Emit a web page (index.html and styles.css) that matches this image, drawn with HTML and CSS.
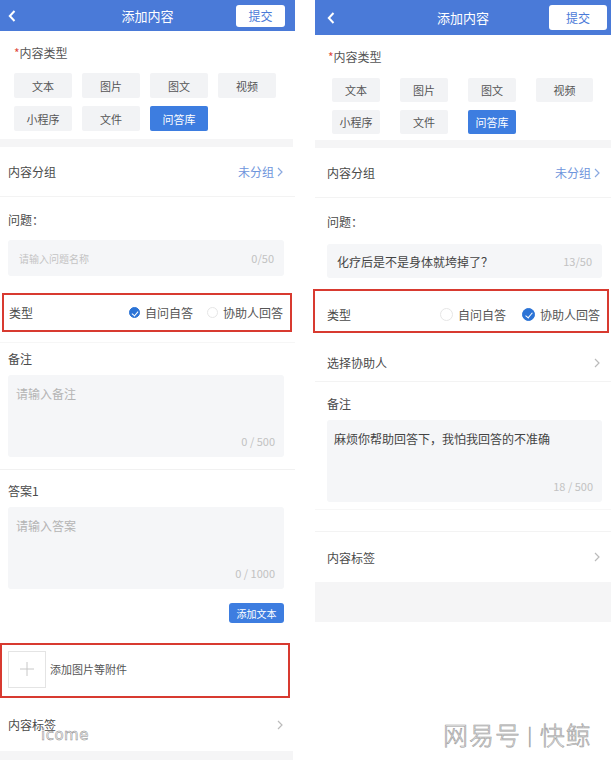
FILE: index.html
```html
<!DOCTYPE html>
<html lang="zh-CN">
<head>
    <meta charset="UTF-8">
    <meta name="viewport" content="width=device-width, initial-scale=1.0">
    <title>添加内容</title>
    <link rel="stylesheet" href="styles.css">
</head>
<body>
    <div class="screens">
        <!-- Left: self answer -->
        <div class="phone phone-a">
            <div class="topbar">
                <svg class="back" width="8" height="12" viewBox="0 0 8 12"><path d="M6.5 1 L1.8 6 L6.5 11" fill="none" stroke="#fff" stroke-width="2"/></svg>
                <div class="title">添加内容</div>
                <div class="submit">提交</div>
            </div>

            <div class="types">
                <div class="label"><span class="req">*</span>内容类型</div>
                <div class="chips">
                    <span class="chip">文本</span>
                    <span class="chip">图片</span>
                    <span class="chip">图文</span>
                    <span class="chip">视频</span>
                    <span class="chip">小程序</span>
                    <span class="chip">文件</span>
                    <span class="chip active">问答库</span>
                </div>
            </div>
            <div class="band"></div>

            <div class="row group-row">
                <span>内容分组</span>
                <span class="link">未分组
                    <svg width="6" height="10" viewBox="0 0 6 10"><path d="M1 1 L5 5 L1 9" fill="none" stroke="#8aa9e0" stroke-width="1.2"/></svg>
                </span>
            </div>

            <div class="field q-field">
                <div class="field-label">问题：</div>
                <div class="input">
                    <span class="placeholder small">请输入问题名称</span>
                    <span class="count">0/50</span>
                </div>
            </div>

            <div class="kind boxed">
                <span>类型</span>
                <div class="radios">
                    <span class="radio checked"><i></i>自问自答</span>
                    <span class="radio"><i></i>协助人回答</span>
                </div>
            </div>

            <div class="field note-field">
                <div class="field-label">备注</div>
                <div class="textarea">
                    <span class="placeholder">请输入备注</span>
                    <span class="count">0 / 500</span>
                </div>
            </div>

            <div class="field answer-field">
                <div class="field-label">答案1</div>
                <div class="textarea">
                    <span class="placeholder">请输入答案</span>
                    <span class="count">0 / 1000</span>
                </div>
                <div class="add-line"><span class="add-text">添加文本</span></div>
            </div>

            <div class="attach boxed">
                <div class="upload">
                    <svg width="14" height="14" viewBox="0 0 14 14"><path d="M7 0 V14 M0 7 H14" stroke="#c8c8c8" stroke-width="1"/></svg>
                </div>
                <span>添加图片等附件</span>
            </div>

            <div class="row tag-row">
                <span>内容标签</span>
                <svg width="6" height="10" viewBox="0 0 6 10"><path d="M1 1 L5 5 L1 9" fill="none" stroke="#bbb" stroke-width="1.2"/></svg>
                <span class="mark-a">icome</span>
            </div>
            <div class="band band-end"></div>
        </div>

        <!-- Right: assistant answer -->
        <div class="phone phone-b">
            <div class="topbar">
                <svg class="back" width="8" height="12" viewBox="0 0 8 12"><path d="M6.5 1 L1.8 6 L6.5 11" fill="none" stroke="#fff" stroke-width="2"/></svg>
                <div class="title">添加内容</div>
                <div class="submit">提交</div>
            </div>

            <div class="types">
                <div class="label"><span class="req">*</span>内容类型</div>
                <div class="chips">
                    <span class="chip">文本</span>
                    <span class="chip">图片</span>
                    <span class="chip">图文</span>
                    <span class="chip wide">视频</span>
                    <span class="chip">小程序</span>
                    <span class="chip">文件</span>
                    <span class="chip active">问答库</span>
                </div>
            </div>
            <div class="band"></div>

            <div class="row group-row">
                <span>内容分组</span>
                <span class="link">未分组
                    <svg width="6" height="10" viewBox="0 0 6 10"><path d="M1 1 L5 5 L1 9" fill="none" stroke="#8aa9e0" stroke-width="1.2"/></svg>
                </span>
            </div>

            <div class="field q-field">
                <div class="field-label">问题：</div>
                <div class="input">
                    <span class="value">化疗后是不是身体就垮掉了？</span>
                    <span class="count">13/50</span>
                </div>
            </div>

            <div class="kind boxed">
                <span>类型</span>
                <div class="radios">
                    <span class="radio"><i></i>自问自答</span>
                    <span class="radio checked"><i></i>协助人回答</span>
                </div>
            </div>

            <div class="row helper-row">
                <span>选择协助人</span>
                <svg width="6" height="10" viewBox="0 0 6 10"><path d="M1 1 L5 5 L1 9" fill="none" stroke="#bbb" stroke-width="1.2"/></svg>
            </div>

            <div class="field note-field">
                <div class="field-label">备注</div>
                <div class="textarea">
                    <span class="value">麻烦你帮助回答下，我怕我回答的不准确</span>
                    <span class="count">18 / 500</span>
                </div>
            </div>

            <div class="row tag-row">
                <span>内容标签</span>
                <svg width="6" height="10" viewBox="0 0 6 10"><path d="M1 1 L5 5 L1 9" fill="none" stroke="#bbb" stroke-width="1.2"/></svg>
            </div>
            <div class="band band-foot"></div>

            <div class="mark-b">网易号 <span class="bar">|</span> 快鲸</div>
        </div>
    </div>
</body>
</html>
```

FILE: styles.css
```css
/* Two phone screens side by side */
body {
    margin: 0;
    background: #fff;
    font-family: "Noto Sans CJK SC", "Noto Sans", sans-serif;
    color: #4a4a4a;
    font-size: 12px;
}

.screens {
    display: flex;
    width: 611px;
    height: 761px;
    overflow: hidden;
}

.phone {
    position: relative;
    display: flex;
    flex-direction: column;
}

.phone-a {
    width: 295px;
}

.phone-b {
    width: 296px;
    margin-left: 20px;
}

/* header */
.topbar {
    position: relative;
    display: flex;
    align-items: center;
    justify-content: center;
    background: #4a7ad8;
    color: #fff;
}

.phone-a .topbar {
    height: 31px;
}

.phone-b .topbar {
    height: 35px;
}

.back {
    position: absolute;
    left: 8px;
}

.phone-b .back {
    left: 12px;
}

.title {
    font-size: 13px;
}

.submit {
    position: absolute;
    background: #fff;
    color: #4a7ad8;
    border-radius: 3px;
    font-size: 12px;
    display: flex;
    align-items: center;
    justify-content: center;
}

.phone-a .submit {
    right: 10px;
    width: 49px;
    height: 22px;
}

.phone-b .submit {
    right: 4px;
    width: 58px;
    height: 25px;
}

/* content type chips */
.types .label {
    line-height: 16px;
    color: #555;
}

.req {
    color: #e04a3c;
}

.chips {
    display: flex;
    flex-wrap: wrap;
}

.chip {
    display: flex;
    align-items: center;
    justify-content: center;
    background: #f2f3f5;
    color: #555;
    font-size: 11px;
    border-radius: 2px;
}

.chip.active {
    background: #3d7de0;
    color: #fff;
}

.phone-a .types {
    padding: 14px 0 8px 14px;
}

.phone-a .chips {
    margin-top: 12px;
    gap: 8px 10px;
}

.phone-a .chip {
    width: 58px;
    height: 25px;
}

.phone-b .types {
    padding: 14px 0 6px 13px;
}

.phone-b .chips {
    margin-top: 13px;
    padding-left: 4px;
    gap: 8px 20px;
    width: 270px;
}

.phone-b .chip {
    width: 48px;
    height: 24px;
}

.phone-b .chip.wide {
    width: 57px;
}

.band {
    height: 8px;
    background: #f5f5f6;
}

.phone-a .band {
    width: 293px;
}

/* list rows */
.row {
    position: relative;
    display: flex;
    align-items: center;
    justify-content: space-between;
}

.phone-a .row {
    padding: 0 12px 0 8px;
}

.phone-b .row {
    padding: 0 11px 0 12px;
}

.group-row {
    height: 49px;
    border-bottom: 1px solid #f3f3f3;
}

.link {
    display: flex;
    align-items: center;
    gap: 3px;
    color: #6e95dc;
}

/* fields */
.field-label {
    line-height: 16px;
}

.phone-a .field {
    padding: 0 11px 0 8px;
}

.phone-b .field {
    padding: 0 9px 0 12px;
}

.input,
.textarea {
    position: relative;
    background: #f5f6f8;
    border-radius: 3px;
}

.input {
    display: flex;
    align-items: center;
    justify-content: space-between;
}

.placeholder {
    color: #b4b4b4;
}

.placeholder.small {
    font-size: 10px;
    color: #c4c4c4;
}

.value {
    color: #444;
}

.count {
    color: #c2c2c2;
    font-size: 11px;
}

.textarea .count {
    position: absolute;
    right: 9px;
    bottom: 8px;
}

.phone-a .q-field {
    padding-top: 15px;
}

.phone-a .q-field .input {
    margin-top: 12px;
    height: 36px;
    padding: 0 10px 0 11px;
}

.phone-b .q-field {
    padding-top: 16px;
}

.phone-b .q-field .input {
    margin-top: 14px;
    height: 34px;
    padding: 0 10px 0 10px;
}

.textarea {
    height: 82px;
    padding: 10px 8px;
    box-sizing: border-box;
}

/* type radio row */
.boxed {
    border: 2px solid #d83a30;
    box-sizing: border-box;
}

.kind {
    display: flex;
    align-items: center;
    justify-content: space-between;
}

.phone-a .kind {
    margin: 17px 3px 0 2px;
    height: 39px;
    padding: 0 7px 0 5px;
}

.phone-b .kind {
    margin: 11px 2px 0 -2px;
    height: 44px;
    padding: 6px 7px 0 12px;
}

.radios {
    display: flex;
    align-items: center;
}

.radio {
    display: flex;
    align-items: center;
    gap: 5px;
    color: #555;
}

.radio i {
    width: 11px;
    height: 11px;
    border-radius: 50%;
    border: 1px solid #e6e6e6;
    box-sizing: border-box;
    position: relative;
}

.radio.checked i {
    background: #2b73d6;
    border-color: #2b73d6;
}

.radio.checked i::after {
    content: "";
    position: absolute;
    left: 3px;
    top: 2px;
    width: 3px;
    height: 5px;
    border: solid #fff;
    border-width: 0 1.2px 1.2px 0;
    transform: rotate(40deg);
}

.phone-a .radios {
    gap: 14px;
}

.phone-b .radios {
    gap: 16px;
}

.phone-b .radio i {
    width: 13px;
    height: 13px;
}

.phone-b .radio.checked i::after {
    left: 4px;
    top: 2px;
    height: 6px;
}

/* left column lower parts */
.phone-a .note-field {
    margin-top: 10px;
    border-top: 1px solid #f6f6f6;
    padding-top: 8px;
    padding-bottom: 12px;
    border-bottom: 1px solid #f1f1f1;
}

.phone-a .note-field .textarea,
.phone-a .answer-field .textarea {
    margin-top: 8px;
}

.phone-a .answer-field {
    padding-top: 13px;
}

.add-line {
    display: flex;
    justify-content: flex-end;
    margin-top: 14px;
}

.add-text {
    background: #3d7de0;
    color: #fff;
    font-size: 10px;
    height: 20px;
    width: 55px;
    border-radius: 3px;
    display: flex;
    align-items: center;
    justify-content: center;
}

.attach {
    margin: 20px 5px 0 0;
    height: 55px;
    display: flex;
    align-items: center;
    gap: 4px;
    padding: 0 0 3px 6px;
    font-size: 11px;
    color: #555;
}

.upload {
    width: 38px;
    height: 37px;
    border: 1px solid #e4e4e4;
    box-sizing: border-box;
    display: flex;
    align-items: center;
    justify-content: center;
}

.phone-a .tag-row {
    height: 53px;
}

.band-end {
    height: 9px;
}

.mark-a {
    position: absolute;
    left: 41px;
    top: 28px;
    font-family: "DejaVu Sans", sans-serif;
    font-size: 15px;
    color: #f4f4f4;
    -webkit-text-stroke: 0.5px #8c8c8c;
    letter-spacing: 0.5px;
}

/* right column lower parts */
.helper-row {
    height: 49px;
    padding-top: 11px !important;
    box-sizing: border-box;
    border-bottom: 1px solid #f3f3f3;
}

.phone-b .note-field {
    padding-top: 14px;
    padding-bottom: 7px;
    border-bottom: 1px solid #f7f7f7;
}

.phone-b .note-field .textarea {
    margin-top: 8px;
    padding: 10px 7px;
}

.phone-b .tag-row {
    margin-top: 21px;
    height: 50px;
    border-top: 1px solid #f3f3f3;
}

.band-foot {
    height: 40px;
}

.mark-b {
    position: absolute;
    left: 128px;
    top: 716px;
    font-size: 25px;
    font-weight: 300;
    color: #eeeeee;
    -webkit-text-stroke: 0.6px #9a9a9a;
    letter-spacing: 1px;
}

.mark-b .bar {
    font-size: 18px;
    vertical-align: 3px;
}
```
